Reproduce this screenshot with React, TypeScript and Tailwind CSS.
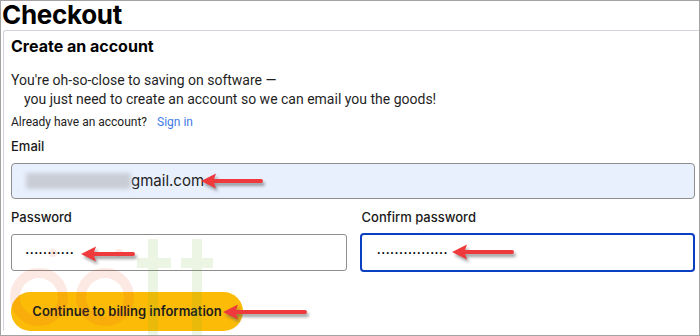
import React from "react";

function Arrow({ x, y, len }: { x: number; y: number; len: number }) {
  // arrow pointing left, head tip at (x,y)
  return (
    <svg
      className="absolute pointer-events-none"
      style={{ left: x - 4, top: y - 10, width: len + 16, height: 26 }}
      viewBox={`0 0 ${len + 16} 26`}
    >
      <defs>
        <filter id={`sh${x}${y}`} x="-20%" y="-50%" width="140%" height="200%">
          <feGaussianBlur stdDeviation="1.6" />
        </filter>
      </defs>
      <g transform="translate(2,3)" filter={`url(#sh${x}${y})`} opacity="0.55">
        <path d={`M4 10 L19 2.5 L17 8.5 L${len} 8.5 L${len} 11.5 L17 11.5 L19 17.5 Z`} fill="#555" />
        <line x1="16" y1="10" x2={len} y2="10" stroke="#555" strokeWidth="4" strokeLinecap="round" />
      </g>
      <path d={`M4 10 L19 2.5 L17 8.3 L${len} 8.3 L${len} 11.7 L17 11.7 L19 17.5 Z`} fill="#ee3a3c" />
      <line x1="16" y1="10" x2={len} y2="10" stroke="#ee3a3c" strokeWidth="4" strokeLinecap="round" />
    </svg>
  );
}

export default function App() {
  return (
    <div
      className="relative w-[700px] h-[336px] overflow-hidden bg-white border border-[#a3a3a3] text-[#1a1a1a]"
      style={{ fontFamily: "Roboto, 'Liberation Sans', sans-serif" }}
    >
      <h1
        className="h-[29px] pl-[1px] pt-[1px] text-[26px] font-bold leading-[26px] tracking-[-0.3px] text-black"
        style={{ fontFamily: "Inter, 'Liberation Sans', sans-serif" }}
      >
        Checkout
      </h1>
      <div className="ml-[2px] w-[720px] border-t border-l border-[#d3d3dc] rounded-tl-[3px] pl-[7px] pt-[5px]">
        <div className="w-[684px]">
          <h2
            className="text-[16px] font-bold leading-[20px] text-black"
            style={{ fontFamily: "Inter, 'Liberation Sans', sans-serif" }}
          >
            Create an account
          </h2>
          <p className="mt-[15px] text-[14px] leading-[19px] text-[#1f1f1f]">
            You're oh-so-close to saving on software —
            <br />
            <span className="pl-[13px]">you just need to create an account so we can email you the goods!</span>
          </p>
          <p className="mt-[5px] text-[12px] leading-[16px] text-[#222]">
            Already have an account?<span className="ml-[10px] text-[#3f7be6]">Sign in</span>
          </p>
          <div style={{ fontFamily: "Inter, 'Liberation Sans', sans-serif" }}>
            <label className="block mt-[7px] text-[13px] font-medium leading-[18px] text-[#1a1a1a]">Email</label>
            <div className="mt-[8px] h-[36px] rounded-[4px] border border-[#8e8e8e] bg-[#e8f0fe] flex items-center pl-[14px]">
              <div className="w-[105px] h-[16px] bg-[#c9cdd6] blur-[2px] rounded-[2px]" />
              <span className="text-[15px] leading-[18px] text-[#222]">gmail.com</span>
            </div>
            <div className="mt-[9px] grid grid-cols-2 gap-[13px]">
              <div>
                <label className="block text-[13px] font-medium leading-[18px]">Password</label>
                <div className="mt-[8px] h-[37px] rounded-[3px] border border-[#8e8e8e] bg-white flex items-center pl-[14px]">
                  <span
                    className="text-[7px] leading-[8px] tracking-[2px] text-black"
                    style={{ fontFamily: "'Liberation Sans', sans-serif" }}
                  >
                    •••••••••••
                  </span>
                </div>
              </div>
              <div>
                <label className="block pl-[2px] text-[13px] font-medium leading-[18px]">Confirm password</label>
                <div className="mt-[7px] h-[39px] rounded-[4px] border-2 border-[#0a3fc2] bg-white flex items-center pl-[16px]">
                  <span
                    className="text-[7px] leading-[8px] tracking-[2px] text-black"
                    style={{ fontFamily: "'Liberation Sans', sans-serif" }}
                  >
                    ••••••••••••••••
                  </span>
                </div>
              </div>
            </div>
            <button className="mt-[20px] h-[39px] w-[232px] rounded-full bg-[#fbbb06] text-[13px] font-semibold text-[#1d1d1d]">
              Continue to billing information
            </button>
          </div>
        </div>
      </div>

      {/* watermark */}
      <svg className="absolute left-0 top-0 pointer-events-none" width="700" height="336" viewBox="0 0 700 336">
        <g opacity="0.12" fill="none" strokeWidth="10">
          <circle cx="38" cy="296" r="24" stroke="#e8502c" />
          <circle cx="104" cy="296" r="24" stroke="#e8502c" />
          <path d="M152 238 V336 M136 262 H170" stroke="#6bb52d" />
          <path d="M196 238 V336 M180 262 H212" stroke="#6bb52d" />
        </g>
        <g opacity="0.12" fill="#e8502c">
          <circle cx="52" cy="252" r="4" />
          <circle cx="118" cy="252" r="4" />
        </g>
      </svg>

      <Arrow x={200} y={180} len={64} />
      <Arrow x={80} y={253} len={56} />
      <Arrow x={451} y={251} len={64} />
      <Arrow x={222} y={311} len={86} />
    </div>
  );
}
